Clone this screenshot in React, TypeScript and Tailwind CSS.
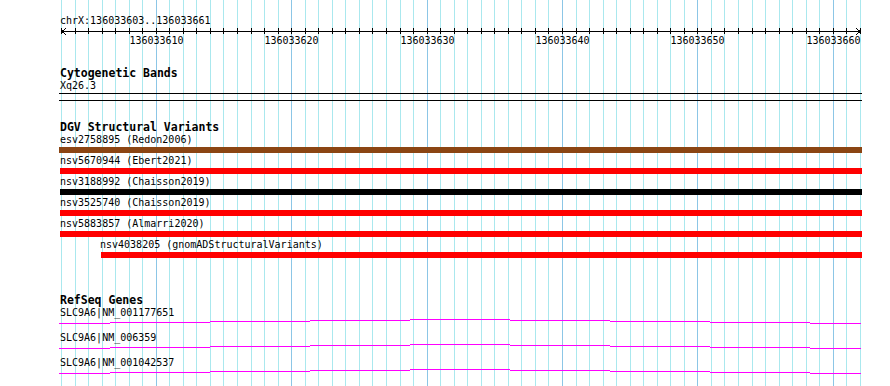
import React from 'react';

const LEFT = 61;
const STEP = 13.54;
const gridX = (i: number) => Math.round(LEFT + i * STEP);
const columns = Array.from({ length: 60 }, (_, i) => i);
const majors = [7, 17, 27, 37, 47, 57];

type Variant = {
  label: string;
  bar: string;
  textIndent: string;
  barIndent: string;
};

const variants: Variant[] = [
  { label: 'esv2758895 (Redon2006)', bar: 'bg-[#8b4513] w-[803px]', textIndent: 'ml-[60px]', barIndent: 'ml-[59px]' },
  { label: 'nsv5670944 (Ebert2021)', bar: 'bg-[#ff0000] w-[802px]', textIndent: 'ml-[60px]', barIndent: 'ml-[60px]' },
  { label: 'nsv3188992 (Chaisson2019)', bar: 'bg-black w-[802px]', textIndent: 'ml-[60px]', barIndent: 'ml-[60px]' },
  { label: 'nsv3525740 (Chaisson2019)', bar: 'bg-[#ff0000] w-[802px]', textIndent: 'ml-[60px]', barIndent: 'ml-[60px]' },
  { label: 'nsv5883857 (Almarri2020)', bar: 'bg-[#ff0000] w-[802px]', textIndent: 'ml-[60px]', barIndent: 'ml-[60px]' },
  { label: 'nsv4038205 (gnomADStructuralVariants)', bar: 'bg-[#ff0000] w-[761px]', textIndent: 'ml-[100px]', barIndent: 'ml-[101px]' },
];

const transcripts = ['SLC9A6|NM_001177651', 'SLC9A6|NM_006359', 'SLC9A6|NM_001042537'];

// intron "hat" drawn as 1px steps, rising to the middle and back
const hatSteps: [number, number, number][] = [
  [59, 110, 4],
  [110, 210, 3],
  [210, 310, 2],
  [310, 410, 1],
  [410, 510, 0],
  [510, 610, 1],
  [610, 710, 2],
  [710, 810, 3],
  [810, 861, 4],
];

const mono = "font-['DejaVu_Sans_Mono','Liberation_Mono',monospace]";

const Heading: React.FC<{ text: string; className?: string }> = ({ text, className }) => (
  <div className={`ml-[60px] h-[13px] text-[11.5px] leading-[13px] font-bold whitespace-pre ${className ?? ''}`}>
    {text}
  </div>
);

const Label: React.FC<{ text: string; className?: string }> = ({ text, className }) => (
  <div className={`h-[12px] text-[10px] leading-[12px] whitespace-pre ${className ?? 'ml-[60px]'}`}>{text}</div>
);

const GridLines = () => (
  <svg className="absolute inset-0" width={890} height={386} shapeRendering="crispEdges">
    {columns.map((i) => (
      <rect
        key={i}
        x={gridX(i)}
        y={0}
        width={1}
        height={386}
        fill={majors.includes(i) ? '#8cc6e6' : '#aae8ee'}
      />
    ))}
  </svg>
);

const Ruler = () => (
  <svg width={890} height={20} className="block" shapeRendering="crispEdges">
    <rect x={61} y={4} width={800} height={1} fill="#000" />
    {columns.map((i) => (
      <rect key={i} x={gridX(i)} y={1} width={1} height={6} fill="#000" />
    ))}
    <path d="M66 1.5 L61.5 4.5 L66 7.5" fill="none" stroke="#000" strokeWidth={1} />
    <path d="M856 1.5 L860.5 4.5 L856 7.5" fill="none" stroke="#000" strokeWidth={1} />
    {majors.map((i, n) => (
      <text
        key={i}
        x={gridX(i) + 0.5}
        y={17}
        textAnchor="middle"
        fontSize={10}
        fontFamily="'DejaVu Sans Mono', 'Liberation Mono', monospace"
        fill="#000"
      >
        {136033610 + n * 10}
      </text>
    ))}
  </svg>
);

const Hat = () => (
  <svg width={890} height={13} className="block" shapeRendering="crispEdges">
    {hatSteps.map(([x1, x2, y]) => (
      <rect key={x1} x={x1} y={y} width={x2 - x1} height={1} fill="#ff00ff" />
    ))}
  </svg>
);

const App: React.FC = () => {
  return (
    <div className={`relative w-[890px] h-[386px] overflow-hidden bg-white text-black ${mono}`}>
      <GridLines />
      <div className="relative flex flex-col pt-[15px]">
        <Label text="chrX:136033603..136033661" />
        <Ruler />

        <Heading text="Cytogenetic Bands" className="mt-[20px]" />
        <Label text="Xq26.3" />
        <div className="ml-[59px] w-[803px] h-px bg-black mt-px" />
        <div className="ml-[59px] w-[803px] h-px bg-black mt-[6px]" />

        <Heading text="DGV Structural Variants" className="mt-[20px]" />
        {variants.map((v) => (
          <div key={v.label} className="flex flex-col">
            <Label text={v.label} className={v.textIndent} />
            <div className={`h-[6px] mt-px mb-[2px] ${v.bar} ${v.barIndent}`} />
          </div>
        ))}

        <Heading text="RefSeq Genes" className="mt-[34px]" />
        {transcripts.map((t) => (
          <div key={t} className="flex flex-col">
            <Label text={t} />
            <Hat />
          </div>
        ))}
      </div>
    </div>
  );
};

export default App;
